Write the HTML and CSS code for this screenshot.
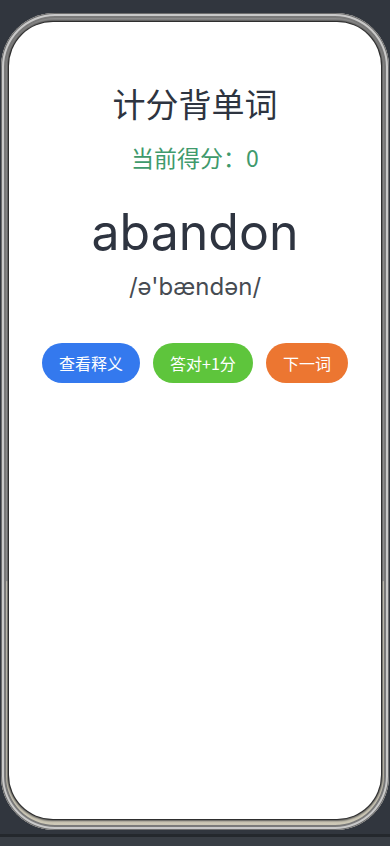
FILE: index.html
```html
<!DOCTYPE html>
<html lang="zh-CN">
<head>
    <meta charset="UTF-8">
    <meta name="viewport" content="width=device-width, initial-scale=1.0">
    <title>计分背单词</title>
    <link rel="stylesheet" href="styles.css">
</head>
<body>
    <div class="device">
        <div class="phone">
            <div class="screen">
                <h1 class="title">计分背单词</h1>
                <p class="score">当前得分：<span id="score">0</span></p>
                <div class="word">abandon</div>
                <div class="phonetic">/ə'bændən/</div>
                <div class="actions">
                    <button class="btn btn-blue">查看释义</button>
                    <button class="btn btn-green">答对+1分</button>
                    <button class="btn btn-orange">下一词</button>
                </div>
            </div>
        </div>
    </div>
    <div class="taskbar"></div>
</body>
</html>
```

FILE: styles.css
```css
body {
    margin: 0;
    padding: 0;
    background-color: #31363e;
    font-family: "Noto Sans CJK SC", sans-serif;
    height: 846px;
    overflow: hidden;
}

.device {
    padding: 13px 1px 0;
    height: 821px;
}

.phone {
    height: 817px;
    box-sizing: border-box;
    padding: 9px 8px 11px;
    border-radius: 54px;
    background: linear-gradient(to bottom, #8f8f8f 0%, #a2a2a2 69.5%, #dcd8c8 69.6%, #cdc8b6 100%);
    box-shadow: inset 0 0 0 1px #6d6d6d, inset 0 0 0 3px #c9c9c9, inset 0 0 0 5px #7a7a7a;
}

.screen {
    height: 100%;
    background: white;
    border-radius: 44px;
    box-shadow: 0 0 0 1px #2e2e2e, 0 0 2px 2px #555;
    display: flex;
    flex-direction: column;
    align-items: center;
    text-align: center;
    color: #2e3440;
}

.title {
    margin: 61px 0 0;
    font-size: 33px;
    font-weight: 400;
    line-height: 40px;
}

.score {
    margin: 19px 0 0;
    font-size: 23px;
    line-height: 30px;
    color: #3f9a6c;
}

.word {
    margin-top: 30px;
    font-family: Inter, "Noto Sans", sans-serif;
    font-size: 50px;
    line-height: 60px;
    color: #2e3440;
}

.phonetic {
    margin-top: 10px;
    font-family: Inter, "Noto Sans", sans-serif;
    font-size: 24px;
    line-height: 30px;
    color: #464b52;
}

.actions {
    display: flex;
    gap: 13px;
    margin-top: 41px;
}

.btn {
    height: 40px;
    padding: 0 17px;
    border: none;
    border-radius: 20px;
    color: white;
    font-family: "Noto Sans CJK SC", sans-serif;
    font-size: 16px;
    cursor: pointer;
}

.btn-blue {
    background-color: #3479ee;
}

.btn-green {
    background-color: #5ec53c;
}

.btn-orange {
    background-color: #ec7631;
}

.taskbar {
    height: 3px;
    background-color: #24282d;
    border-bottom: 9px solid #393e45;
}
```
